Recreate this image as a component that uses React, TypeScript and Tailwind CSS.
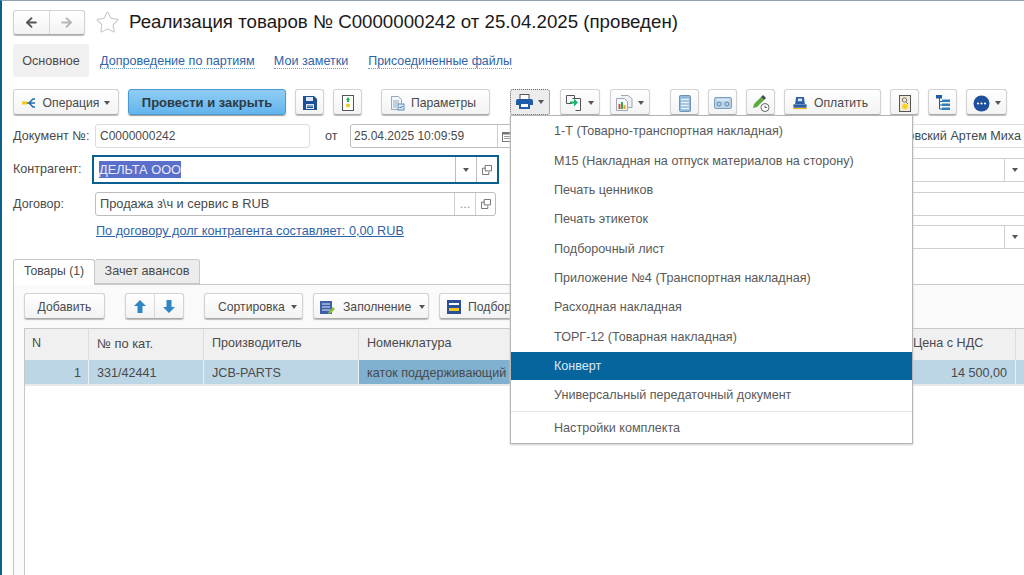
import { ArrowLeft, ArrowRight, Star } from "lucide-react";
import type { ReactNode } from "react";

const Caret = () => (
  <svg width="6" height="4" viewBox="0 0 6 4" className="shrink-0">
    <path d="M0 0h6L3 4z" fill="#555" />
  </svg>
);

const Btn = ({ className = "", children }: { className?: string; children: ReactNode }) => (
  <div
    className={`h-[26px] shrink-0 flex items-center justify-center pt-[2px] rounded-[3px] border border-[#d2d2d2] border-b-[#a9a9a9] bg-gradient-to-b from-white to-[#f3f3f3] shadow-[0_1px_1px_#bbb] text-[12.2px] text-[#4a4a4a] ${className}`}
  >
    {children}
  </div>
);

const CopyIcon = () => (
  <svg width="10" height="10" viewBox="0 0 11 11" fill="none" stroke="#666">
    <path d="M3.5.5h7v6h-7z" />
    <path d="M3.5 3.5h-3v7h7v-3" />
  </svg>
);

const menuItems = [
  "1-Т (Товарно-транспортная накладная)",
  "М15 (Накладная на отпуск материалов на сторону)",
  "Печать ценников",
  "Печать этикеток",
  "Подборочный лист",
  "Приложение №4 (Транспортная накладная)",
  "Расходная накладная",
  "ТОРГ-12 (Товарная накладная)",
];

export default function App() {
  return (
    <div className="relative w-[1024px] h-[575px] overflow-hidden bg-white border-l-2 border-l-[#0b5f8f] border-t border-t-[#8fa3ad] font-['Liberation_Sans',sans-serif] text-[12.6px] text-[#4a4a4a]">
      {/* Title */}
      <div className="flex items-center h-[32px] mt-[5px] ml-[11px]">
        <div className="flex h-[25px] w-[72px] rounded-[3px] border border-[#d2d2d2] border-b-[#a9a9a9] bg-gradient-to-b from-white to-[#f3f3f3] shadow-[0_1px_1px_#bbb]">
          <div className="flex-1 flex items-center justify-center border-r border-[#d8d8d8]">
            <ArrowLeft size={15} strokeWidth={3} color="#555" />
          </div>
          <div className="flex-1 flex items-center justify-center">
            <ArrowRight size={15} strokeWidth={3} color="#b5b5b5" />
          </div>
        </div>
        <Star size={25} strokeWidth={1} color="#c4c4c4" className="ml-[10px]" />
        <h1 className="ml-[9px] text-[18.7px] leading-none text-[#1a1a1a] whitespace-nowrap">
          Реализация товаров № С0000000242 от 25.04.2025 (проведен)
        </h1>
      </div>

      {/* Section links */}
      <div className="flex items-center h-[33px] mt-[6px] ml-[11px]">
        <div className="h-[33px] w-[76px] flex items-center justify-center pt-[2px] bg-[#f0f0f0] rounded-[3px]">Основное</div>
        <a className="ml-[11px] mt-[2px] text-[#2e63a8] border-b border-dotted border-[#6d9bd0] leading-[14px]">Допроведение по партиям</a>
        <a className="ml-[19px] mt-[2px] text-[#2e63a8] border-b border-dotted border-[#6d9bd0] leading-[14px]">Мои заметки</a>
        <a className="ml-[20px] mt-[2px] text-[12.4px] text-[#2e63a8] border-b border-dotted border-[#6d9bd0] leading-[14px]">Присоединенные файлы</a>
      </div>

      {/* Command bar */}
      <div className="flex items-center h-[26px] mt-[12px] ml-[11px]">
        <Btn className="w-[106px] gap-[5px]">
          <svg width="16" height="14" viewBox="0 0 16 14">
            <path d="M5 7h2M7 7l4-4h2M7 7h6M7 7l4 4h2" stroke="#1f6db0" strokeWidth="1.5" fill="none" />
            <rect x="0" y="5.5" width="5" height="3" fill="#f2c81e" />
          </svg>
          Операция <Caret />
        </Btn>
        <div className="ml-[9px] w-[158px] h-[26px] shrink-0 flex items-center justify-center pt-[2px] rounded-[3px] border border-[#4a9ad0] bg-gradient-to-b from-[#8fcdf5] to-[#62b4ec] text-[13px] font-bold text-[#2d3a44] shadow-[0_1px_1px_#999]">
          Провести и закрыть
        </div>
        <Btn className="ml-[9px] w-[29px]">
          <svg width="14" height="14" viewBox="0 0 14 14">
            <path d="M0 0h11l3 3v11H0z" fill="#1e4f96" />
            <rect x="3" y="1" width="7" height="4" fill="#dfe9f5" />
            <rect x="3" y="8" width="8" height="5" fill="#dfe9f5" />
            <path d="M4 10h6M4 11.5h6" stroke="#1e4f96" />
          </svg>
        </Btn>
        <Btn className="ml-[9px] w-[29px]">
          <svg width="12" height="16" viewBox="0 0 12 16">
            <rect x=".5" y=".5" width="11" height="15" fill="#fff" stroke="#555" />
            <path d="M6 2l2 3H4z" fill="#22b04b" />
            <rect x="5" y="4" width="2" height="3" fill="#22b04b" />
            <circle cx="6" cy="10.5" r="2" fill="#f5c815" />
          </svg>
        </Btn>
        <Btn className="ml-[19px] w-[109px] justify-start pl-[8px] gap-[6px]">
          <svg width="15" height="15" viewBox="0 0 15 15" fill="none">
            <path d="M1.5.5h7l3 3v10h-10z" fill="#f2f5f8" stroke="#9aa9b8" />
            <path d="M3 5h6M3 7h6M3 9h4M3 11h4" stroke="#9aa9b8" />
            <rect x="8" y="8" width="6" height="6" fill="#dbe8f4" stroke="#5c8fc0" />
            <path d="M9.5 11l1 1 2-2" stroke="#1f5c99" />
          </svg>
          Параметры
        </Btn>

        <div className="ml-[20px] h-[26px] w-[40px] shrink-0 flex items-center justify-center gap-[5px] rounded-[3px] border border-dotted border-[#666] bg-[#ececec]">
          <svg width="17" height="16" viewBox="0 0 17 16">
            <rect x="4" y="0.5" width="9" height="5" fill="#fff" stroke="#555" />
            <path d="M2 5h13q2 0 2 2v4h-3v-2H3v2H0V7q0-2 2-2z" fill="#1f5ca8" />
            <rect x="3" y="9" width="11" height="6" fill="#1f5ca8" />
            <rect x="5" y="10" width="7" height="3" fill="#fff" />
          </svg>
          <Caret />
        </div>
        <Btn className="ml-[10px] w-[40px] gap-[5px]">
          <svg width="17" height="16" viewBox="0 0 17 16" fill="none">
            <path d="M6 8.5H.5v-8h8v3" stroke="#555" />
            <path d="M6.5 3.5h8v12h-5" stroke="#555" fill="#fff" />
            <path d="M4 6.5h4v-3l4 4-4 4v-3H4z" fill="#18b26b" />
          </svg>
          <Caret />
        </Btn>
        <Btn className="ml-[10px] w-[40px] gap-[5px]">
          <svg width="17" height="16" viewBox="0 0 17 16" fill="none">
            <path d="M5 .5h7l4 3v9h-4" stroke="#9aa9b8" fill="#eef2f6" />
            <path d="M.5 3.5h8l3 3v9h-11z" stroke="#9aa9b8" fill="#f6f6f6" />
            <rect x="2.5" y="9" width="2" height="5" fill="#d84a3a" />
            <rect x="5" y="7" width="2" height="7" fill="#3aa655" />
            <rect x="7.5" y="10" width="2" height="4" fill="#e0a52a" />
          </svg>
          <Caret />
        </Btn>
        <Btn className="ml-[20px] w-[29px]">
          <svg width="12" height="17" viewBox="0 0 12 17">
            <rect x=".5" y=".5" width="11" height="16" rx="1" fill="#8fb8da" stroke="#6c93b5" />
            <path d="M2 4.5h8M2 7.5h8M2 10.5h8M2 13.5h8" stroke="#e8f1f8" strokeWidth="1.3" />
          </svg>
        </Btn>
        <Btn className="ml-[9px] w-[29px]">
          <svg width="18" height="12" viewBox="0 0 18 12" fill="none">
            <rect x=".5" y=".5" width="17" height="11" rx="1.5" fill="#bcd4e8" stroke="#7d9fbc" />
            <circle cx="5" cy="7" r="2" stroke="#5e86a8" />
            <circle cx="13" cy="7" r="2" stroke="#5e86a8" />
            <path d="M3 3h12" stroke="#eef5fa" />
          </svg>
        </Btn>
        <Btn className="ml-[9px] w-[29px]">
          <svg width="18" height="17" viewBox="0 0 18 17" fill="none">
            <path d="M1 13l1-4 7-7 3 3-7 7z" fill="#5fa83c" />
            <path d="M9 2l2-2 3 3-2 2z" fill="#3c4a55" />
            <circle cx="13" cy="12.5" r="4" fill="#fff" stroke="#666" />
            <path d="M13 10.5v2h2" stroke="#666" />
          </svg>
        </Btn>
        <Btn className="ml-[9px] w-[97px] justify-start pl-[8px] gap-[7px]">
          <svg width="14" height="14" viewBox="0 0 16 14">
            <path d="M3.5 0h9l1 8h-11z" fill="#2a5ca6" />
            <rect x="5.5" y="2" width="5" height="3" fill="#dfe9f5" />
            <rect x="0.5" y="8.5" width="15" height="4" fill="#2a5ca6" />
            <rect x="0" y="12.5" width="16" height="1.5" fill="#f0b429" />
          </svg>
          Оплатить
        </Btn>
        <Btn className="ml-[9px] w-[29px]">
          <svg width="12" height="17" viewBox="0 0 12 17" fill="none">
            <rect x=".5" y=".5" width="11" height="16" fill="#efe9d6" stroke="#555" />
            <circle cx="5.5" cy="5" r="2.2" stroke="#777" />
            <path d="M7 7l2 2" stroke="#777" />
            <circle cx="6" cy="11.5" r="2.7" fill="#f7d318" />
          </svg>
        </Btn>
        <Btn className="ml-[9px] w-[29px]">
          <svg width="14" height="16" viewBox="0 0 14 16">
            <rect x="0" y="0" width="6" height="3.5" fill="#1f5ca8" />
            <path d="M3.5 3v11h3M3.5 6.5h3M3.5 10h3" stroke="#1f5ca8" fill="none" />
            <rect x="6" y="4.5" width="8" height="2.5" fill="#2e7fc0" />
            <rect x="6" y="8.5" width="8" height="2.5" fill="#2e7fc0" />
            <rect x="6" y="12.5" width="8" height="2.5" fill="#2e7fc0" />
          </svg>
        </Btn>
        <Btn className="ml-[9px] w-[41px] gap-[5px]">
          <svg width="17" height="17" viewBox="0 0 17 17">
            <circle cx="8.5" cy="8.5" r="8" fill="#1f4f9c" />
            <circle cx="5" cy="8.5" r="1.1" fill="#fff" />
            <circle cx="8.5" cy="8.5" r="1.1" fill="#fff" />
            <circle cx="12" cy="8.5" r="1.1" fill="#fff" />
          </svg>
          <Caret />
        </Btn>
      </div>

      {/* Form fields */}
      <div className="flex items-center h-[24px] mt-[9px] ml-[11px]">
        <span className="w-[82px] shrink-0">Документ №:</span>
        <div className="w-[215px] h-[24px] shrink-0 flex items-center px-[4px] rounded-[3px] border border-[#dcdcdc] bg-white text-[12px]">С0000000242</div>
        <span className="ml-[15px] w-[25px] shrink-0">от</span>
        <div className="w-[167px] h-[24px] shrink-0 flex items-center pl-[3px] rounded-l-[3px] border border-[#bdbdbd] text-[12px]">
          <span className="flex-1">25.04.2025 10:09:59</span>
          <div className="w-[19px] h-[22px] flex items-center pl-[4px] border-l border-[#cfcfcf]">
            <svg width="10" height="11" viewBox="0 0 10 11" fill="none">
              <rect x=".5" y="1.5" width="9" height="9" stroke="#777" />
              <rect x="0" y="1" width="10" height="2.5" fill="#777" />
              <path d="M2 5.500h6M2 7.500h6" stroke="#999" />
            </svg>
          </div>
        </div>
        <div className="ml-auto w-[124px] h-[24px] flex items-center justify-end pr-[3px] overflow-hidden text-[#3f4a52] whitespace-nowrap border-y border-[#dedede]">ровский Артем Миха</div>
      </div>

      <div className="flex items-center h-[29px] mt-[7px] ml-[11px]">
        <span className="w-[79px] shrink-0">Контрагент:</span>
        <div className="w-[407px] h-[29px] shrink-0 flex items-center pl-[5px] border-2 border-[#0b5f8f] bg-white">
          <span className="flex-1 text-[12.8px] leading-[17px]"><span className="inline-block bg-[#5a6fc9] text-[#e9ecf8]">ДЕЛЬТА ООО</span></span>
          <div className="w-[21px] h-[25px] flex items-center justify-center border-l border-[#bdbdbd]"><Caret /></div>
          <div className="w-[21px] h-[25px] flex items-center justify-center border-l border-[#bdbdbd]"><CopyIcon /></div>
        </div>
        <div className="ml-auto w-[124px] h-[24px] flex items-center justify-end border-y border-[#cfcfcf]">
          <div className="w-[20px] h-[24px] flex items-center justify-center border-l border-[#cfcfcf]"><Caret /></div>
        </div>
      </div>

      <div className="flex items-center h-[24px] mt-[8px] ml-[11px]">
        <span className="w-[82px] shrink-0">Договор:</span>
        <div className="w-[401px] h-[24px] shrink-0 flex items-center pl-[4px] rounded-[3px] border border-[#bdbdbd] bg-white">
          <span className="flex-1 text-[12.8px]">Продажа з\ч и сервис в RUB</span>
          <div className="w-[21px] h-[22px] flex items-center justify-center border-l border-[#cfcfcf] text-[#999]">...</div>
          <div className="w-[20px] h-[22px] flex items-center justify-center border-l border-[#cfcfcf]"><CopyIcon /></div>
        </div>
        <div className="ml-auto w-[124px] h-[24px] border-y border-[#cfcfcf]" />
      </div>

      <div className="flex items-start h-[24px] mt-[9px] ml-[94px]">
        <a className="-mt-[3px] text-[12.7px] text-[#2e63a8] underline whitespace-nowrap">По договору долг контрагента составляет: 0,00 RUB</a>
        <div className="ml-auto w-[124px] h-[24px] flex items-center justify-end border-y border-[#cfcfcf]">
          <div className="w-[20px] h-[24px] flex items-center justify-center border-l border-[#cfcfcf]"><Caret /></div>
        </div>
      </div>

      {/* Tabs */}
      <div className="flex items-end h-[26px] mt-[9px] ml-[11px]">
        <div className="w-[82px] h-[26px] flex items-center justify-center pb-[2px] rounded-t-[3px] border border-b-0 border-[#c8c8c8] bg-white z-10 -mb-px text-[12.2px]">Товары (1)</div>
        <div className="w-[105px] h-[25px] flex items-center justify-center rounded-t-[3px] border border-l-0 border-[#c8c8c8] bg-[#ececec] text-[12.7px]">Зачет авансов</div>
      </div>

      {/* Tab body */}
      <div className="ml-[11px] h-[320px] border-l border-t border-[#c8c8c8] bg-[#fafafa] pt-[8px] pl-[10px]">
        <div className="flex items-center h-[26px]">
          <Btn className="w-[81px]">Добавить</Btn>
          <div className="ml-[20px] flex h-[26px] w-[59px] rounded-[3px] border border-[#d2d2d2] border-b-[#a9a9a9] bg-gradient-to-b from-white to-[#f3f3f3] shadow-[0_1px_1px_#bbb]">
            <div className="flex-1 flex items-center justify-center border-r border-[#d8d8d8]">
              <svg width="12" height="13" viewBox="0 0 12 13"><path d="M6 0l6 6H8.5v7h-5V6H0z" fill="#2f86c5" /></svg>
            </div>
            <div className="flex-1 flex items-center justify-center">
              <svg width="12" height="13" viewBox="0 0 12 13"><path d="M6 13l6-6H8.5V0h-5v7H0z" fill="#2f86c5" /></svg>
            </div>
          </div>
          <Btn className="ml-[20px] w-[99px] justify-start pl-[13px] gap-[6px]">Сортировка <Caret /></Btn>
          <Btn className="ml-[10px] w-[116px] justify-start pl-[6px] gap-[8px]">
            <svg width="15" height="15" viewBox="0 0 15 15">
              <rect x="0" y="1" width="12" height="13" fill="#3d5fa8" />
              <path d="M2 4h8M2 7h8M2 10h8" stroke="#dfe9f5" />
              <path d="M8 14l1-3 4-4 2 2-4 4z" fill="#8dbb3a" />
            </svg>
            Заполнение <Caret />
          </Btn>
          <Btn className="ml-[10px] w-[100px] justify-start pl-[7px] gap-[7px]">
            <svg width="14" height="14" viewBox="0 0 14 14">
              <rect x="0" y="0" width="14" height="14" fill="#2a4f96" />
              <rect x="2" y="3" width="10" height="2" fill="#fff" />
              <rect x="2" y="8" width="10" height="3" fill="#f2c81e" />
            </svg>
            Подбор
          </Btn>
        </div>

        {/* Table */}
        <div className="mt-[9px] h-[270px] bg-white border-t border-l border-[#c8c8c8]">
          <div className="flex h-[31px] bg-[#f0f0f0]">
            <div className="w-[64px] shrink-0 pl-[7px] pb-[2px] flex items-center border-r border-[#dcdcdc]">N</div>
            <div className="w-[115px] shrink-0 pl-[8px] pb-[2px] flex items-center border-r border-[#dcdcdc] text-[12.9px]">№ по кат.</div>
            <div className="w-[155px] shrink-0 pl-[8px] pb-[2px] flex items-center border-r border-[#dcdcdc]">Производитель</div>
            <div className="w-[545px] shrink-0 pl-[8px] pb-[2px] flex items-center border-r border-[#dcdcdc]">Номенклатура</div>
            <div className="w-[112px] shrink-0 pl-[9px] pb-[2px] flex items-center border-r border-[#dcdcdc] whitespace-nowrap">Цена с НДС</div>
          </div>
          <div className="flex h-[26px] bg-[#bcd6e6] border-b-2 border-[#e8e8e8]">
            <div className="w-[64px] shrink-0 pr-[7px] pt-[2px] flex items-center justify-end border-r border-[#e8f0f5]">1</div>
            <div className="w-[115px] shrink-0 pl-[8px] pt-[2px] flex items-center border-r border-[#e8f0f5]">331/42441</div>
            <div className="w-[155px] shrink-0 pl-[8px] pt-[2px] flex items-center border-r border-[#e8f0f5]">JCB-PARTS</div>
            <div className="w-[545px] shrink-0 pl-[8px] pt-[2px] flex items-center bg-[#7fb0cf] border-r border-[#e8f0f5]">каток поддерживающий</div>
            <div className="w-[112px] shrink-0 pr-[8px] pt-[2px] flex items-center justify-end border-r border-[#e8f0f5]">14 500,00</div>
          </div>
        </div>
      </div>

      {/* Print menu */}
      <div className="absolute left-[508px] top-[114px] w-[403px] h-[329px] pt-[1px] bg-white border border-[#b5b5b5] shadow-[0_1px_2px_#ccc] text-[#5a5a5a]">
        {menuItems.map((item) => (
          <div key={item} className="h-[29.375px] pl-[43px] flex items-center whitespace-nowrap">{item}</div>
        ))}
        <div className="h-[28px] pl-[43px] pt-[1px] flex items-center bg-[#07659e] text-[#dbe9f2]">Конверт</div>
        <div className="h-[30px] pl-[43px] flex items-center">Универсальный передаточный документ</div>
        <div className="mt-[1px] border-t border-[#e4e4dc]" />
        <div className="mt-[1px] h-[30px] pl-[43px] flex items-center">Настройки комплекта</div>
      </div>
    </div>
  );
}
